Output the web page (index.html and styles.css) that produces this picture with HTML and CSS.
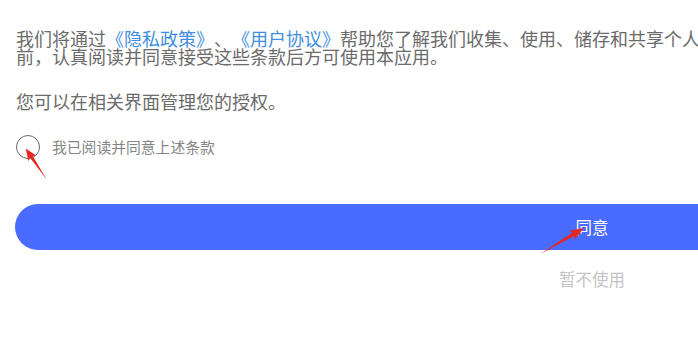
FILE: index.html
```html
<!DOCTYPE html>
<html lang="zh-CN">
<head>
<meta charset="utf-8">
<title>隐私政策</title>
<link rel="stylesheet" href="styles.css">
</head>
<body>
<div class="page">
  <p class="intro">我们将通过<a class="link">《隐私政策》</a>、<a class="link">《用户协议》</a>帮助您了解我们收集、使用、储存和共享个人信息的情况。在您使用本应用<br>前，认真阅读并同意接受这些条款后方可使用本应用。</p>
  <p class="intro second">您可以在相关界面管理您的授权。</p>
  <label class="check-row">
    <span class="radio"></span>
    <span class="check-text">我已阅读并同意上述条款</span>
  </label>
  <button class="agree">同意</button>
  <div class="decline">暂不使用</div>
</div>
<svg class="annot" width="698" height="342" viewBox="0 0 698 342">
  <polygon fill="#e8251f" transform="translate(47,180) rotate(-124)" points="0,0 28,-1.6 26,-4.8 38,0 26,4.8 28,1.6"/>
  <polygon fill="#e8251f" transform="translate(540,254) rotate(-30.6)" points="0,0 39,-1.8 37,-5.2 51,0 37,5.2 39,1.8"/>
</svg>
</body>
</html>
```
FILE: styles.css
```css
html, body {
  margin: 0;
  padding: 0;
  background: #ffffff;
  overflow: hidden;
}
body {
  width: 698px;
  height: 342px;
  position: relative;
  font-family: "Noto Sans CJK SC", "Noto Sans", sans-serif;
  text-spacing-trim: space-all;
}
.page {
  width: 1184px;
  padding: 29px 0 0 16px;
  box-sizing: border-box;
}
.intro {
  margin: 0;
  font-size: 18px;
  line-height: 18px;
  color: #6b6b6b;
  white-space: nowrap;
  text-spacing-trim: space-all;
}
.intro.second {
  margin-top: 27px;
}
.link {
  color: #3f8ee0;
  text-decoration: none;
}
.check-row {
  display: flex;
  align-items: center;
  gap: 12px;
  margin-top: 25px;
  height: 24px;
}
.radio {
  width: 22px;
  height: 22px;
  border: 1px solid #666;
  border-radius: 50%;
  box-sizing: content-box;
}
.check-text {
  font-size: 14.8px;
  color: #858585;
  line-height: 18px;
}
.agree {
  display: block;
  margin: 45px 0 0 -1px;
  width: 1154px;
  height: 46px;
  border: none;
  border-radius: 23px;
  background: #4a6bff;
  color: #ffffff;
  font-family: inherit;
  font-size: 16.5px;
  padding: 0;
}
.decline {
  margin-top: 20px;
  width: 1152px;
  text-align: center;
  font-size: 16.5px;
  line-height: 18px;
  color: #c4c4c4;
}
.annot {
  position: absolute;
  left: 0;
  top: 0;
  pointer-events: none;
}
```
